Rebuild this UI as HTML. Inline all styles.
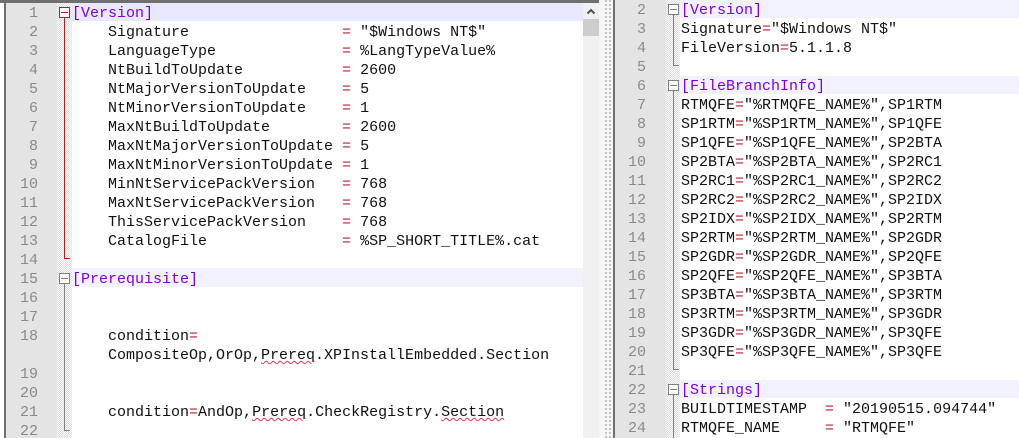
<!DOCTYPE html>
<html>
<head>
<meta charset="utf-8">
<style>
html,body{margin:0;padding:0;background:#fff}
#p{position:relative;width:1019px;height:438px;overflow:hidden;background:#fff}
.a{position:absolute}
pre{position:absolute;margin:0;font:15px/19px "Liberation Mono",monospace;color:#111;white-space:pre}
.n{color:#8a8a8a;text-align:right}
.s{color:#8000d8}
.o{color:#b82030}
.w{text-decoration:underline wavy #d04050 1px;text-underline-offset:1px}
.h{background:repeating-conic-gradient(#dcdcdc 0 25%,#fff 0 50%) 0 0/2px 2px}
.box{position:absolute;width:9px;height:9px;border:1px solid #808080;background:#fff}
.box:after{content:"";position:absolute;left:1px;right:1px;top:4px;height:1px;background:#808080}
.red{border-color:#c01818}
.red:after{background:#c01818}
</style>
</head>
<body>
<div id="p">
<!-- left pane -->
<div class="a" style="left:0;top:0;width:600px;height:3px;background:#6f6f6f"></div>
<div class="a" style="left:4px;top:0;width:2px;height:438px;background:#707070"></div>
<div class="a" style="left:6px;top:3px;width:51px;height:435px;background:#e4e4e4"></div>
<div class="a h" style="left:57px;top:3px;width:15px;height:435px"></div>
<div class="a" style="left:72px;top:3px;width:511px;height:18px;background:#e8e8ff"></div>
<div class="a" style="left:72px;top:268px;width:511px;height:19px;background:#f2f2ff"></div>
<div class="a" style="left:64px;top:17px;width:1px;height:241px;background:#c01818"></div>
<div class="a" style="left:64px;top:258px;width:6px;height:1px;background:#c01818"></div>
<div class="a" style="left:64px;top:283px;width:1px;height:147px;background:#808080"></div>
<div class="a" style="left:64px;top:430px;width:6px;height:1px;background:#808080"></div>
<div class="box red" style="left:59px;top:7px"></div>
<div class="box" style="left:59px;top:273px"></div>
<pre class="n" style="left:6px;top:4px;width:32px">1
2
3
4
5
6
7
8
9
10
11
12
13
14
15
16
17
18

19
20
21
22</pre>
<pre style="left:72px;top:4px"><span class="s">[Version]</span>
    Signature                 <span class="o">=</span> "$Windows NT$"
    LanguageType              <span class="o">=</span> %LangTypeValue%
    NtBuildToUpdate           <span class="o">=</span> 2600
    NtMajorVersionToUpdate    <span class="o">=</span> 5
    NtMinorVersionToUpdate    <span class="o">=</span> 1
    MaxNtBuildToUpdate        <span class="o">=</span> 2600
    MaxNtMajorVersionToUpdate <span class="o">=</span> 5
    MaxNtMinorVersionToUpdate <span class="o">=</span> 1
    MinNtServicePackVersion   <span class="o">=</span> 768
    MaxNtServicePackVersion   <span class="o">=</span> 768
    ThisServicePackVersion    <span class="o">=</span> 768
    CatalogFile               <span class="o">=</span> %SP_SHORT_TITLE%.cat

<span class="s">[Prerequisite]</span>


    condition<span class="o">=</span>
    CompositeOp,OrOp,<span class="w">Prereq</span>.XPInstallEmbedded.Section


    condition<span class="o">=</span>AndOp,<span class="w">Prereq</span>.CheckRegistry.<span class="w">Section</span></pre>
<!-- scrollbar -->
<div class="a" style="left:583px;top:3px;width:16px;height:435px;background:#f0f0f0"></div>
<div class="a" style="left:583px;top:19px;width:16px;height:17px;background:#cdcdcd"></div>
<svg class="a" style="left:583px;top:3px" width="16" height="16"><path d="M4.5 10.5 8 7l3.5 3.5" fill="none" stroke="#505050" stroke-width="2"/></svg>
<!-- splitter -->
<div class="a" style="left:599px;top:0;width:14px;height:438px;background:#f6f6f6"></div>
<div class="a" style="left:605px;top:0;width:6px;height:438px;background:repeating-linear-gradient(#c4c4c4 0 2px,#f6f6f6 2px 4px)"></div>
<div class="a" style="left:607px;top:0;width:2px;height:438px;background:#f6f6f6"></div>
<div class="a" style="left:613px;top:0;width:2px;height:438px;background:#6f6f6f"></div>
<!-- right pane -->
<div class="a" style="left:615px;top:0;width:51px;height:438px;background:#e4e4e4"></div>
<div class="a h" style="left:666px;top:0;width:14px;height:438px"></div>
<div class="a" style="left:680px;top:0;width:339px;height:18px;background:#f2f2ff"></div>
<div class="a" style="left:680px;top:76px;width:339px;height:18px;background:#f2f2ff"></div>
<div class="a" style="left:680px;top:380px;width:339px;height:18px;background:#f2f2ff"></div>
<div class="a" style="left:673px;top:14px;width:1px;height:52px;background:#808080"></div>
<div class="a" style="left:673px;top:65px;width:6px;height:1px;background:#808080"></div>
<div class="a" style="left:673px;top:90px;width:1px;height:279px;background:#808080"></div>
<div class="a" style="left:673px;top:369px;width:6px;height:1px;background:#808080"></div>
<div class="a" style="left:673px;top:394px;width:1px;height:44px;background:#808080"></div>
<div class="box" style="left:668px;top:4px"></div>
<div class="box" style="left:668px;top:80px"></div>
<div class="box" style="left:668px;top:384px"></div>
<pre class="n" style="left:615px;top:1px;width:31px">2
3
4
5
6
7
8
9
10
11
12
13
14
15
16
17
18
19
20
21
22
23
24</pre>
<pre style="left:681px;top:1px"><span class="s">[Version]</span>
Signature<span class="o">=</span>"$Windows NT$"
FileVersion<span class="o">=</span>5.1.1.8

<span class="s">[FileBranchInfo]</span>
RTMQFE<span class="o">=</span>"%RTMQFE_NAME%",SP1RTM
SP1RTM<span class="o">=</span>"%SP1RTM_NAME%",SP1QFE
SP1QFE<span class="o">=</span>"%SP1QFE_NAME%",SP2BTA
SP2BTA<span class="o">=</span>"%SP2BTA_NAME%",SP2RC1
SP2RC1<span class="o">=</span>"%SP2RC1_NAME%",SP2RC2
SP2RC2<span class="o">=</span>"%SP2RC2_NAME%",SP2IDX
SP2IDX<span class="o">=</span>"%SP2IDX_NAME%",SP2RTM
SP2RTM<span class="o">=</span>"%SP2RTM_NAME%",SP2GDR
SP2GDR<span class="o">=</span>"%SP2GDR_NAME%",SP2QFE
SP2QFE<span class="o">=</span>"%SP2QFE_NAME%",SP3BTA
SP3BTA<span class="o">=</span>"%SP3BTA_NAME%",SP3RTM
SP3RTM<span class="o">=</span>"%SP3RTM_NAME%",SP3GDR
SP3GDR<span class="o">=</span>"%SP3GDR_NAME%",SP3QFE
SP3QFE<span class="o">=</span>"%SP3QFE_NAME%",SP3QFE

<span class="s">[Strings]</span>
BUILDTIMESTAMP  <span class="o">=</span> "20190515.094744"
RTMQFE_NAME     <span class="o">=</span> "RTMQFE"</pre>
</div>
</body>
</html>
